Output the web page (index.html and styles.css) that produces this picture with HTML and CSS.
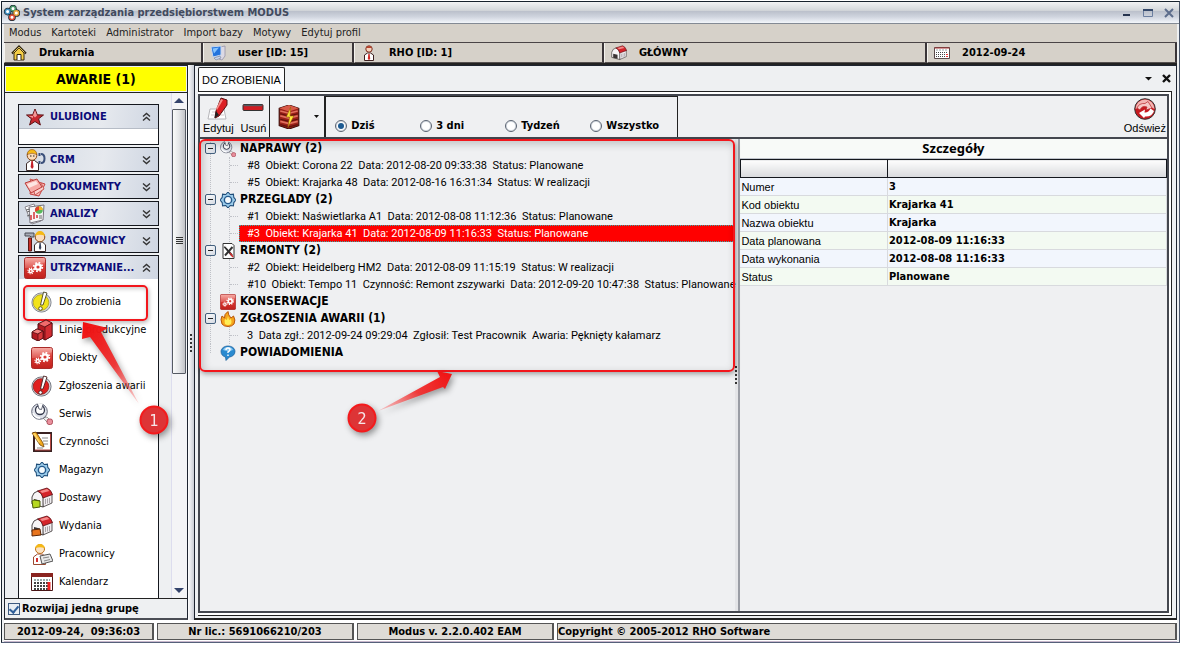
FILE: index.html
```
<!DOCTYPE html>
<html lang="pl">
<head>
<meta charset="utf-8">
<title>System zarządzania przedsiębiorstwem MODUS</title>
<link rel="stylesheet" href="styles.css">
</head>
<body>
<svg class="defs" aria-hidden="true">
  <defs>
    <linearGradient id="red" x1="0" y1="0" x2="0" y2="1"><stop offset="0" stop-color="#f79a92"/><stop offset=".45" stop-color="#d93a34"/><stop offset="1" stop-color="#c0201c"/></linearGradient>
    <linearGradient id="fade1" x1="0" y1="0" x2="1" y2="1"><stop offset="0" stop-color="#f00e0e"/><stop offset=".55" stop-color="#f22828" stop-opacity=".9"/><stop offset="1" stop-color="#f66" stop-opacity=".25"/></linearGradient>
    <linearGradient id="fade2" x1="1" y1="0" x2="0" y2="1"><stop offset="0" stop-color="#f00e0e"/><stop offset=".5" stop-color="#f22828" stop-opacity=".9"/><stop offset="1" stop-color="#f66" stop-opacity=".3"/></linearGradient>
    <symbol id="i-logo" viewBox="0 0 16 16"><g fill="none" stroke-width="3" stroke="#1c2b33"><circle cx="9" cy="3.600" r="2.300"/><circle cx="3.600" cy="6.600" r="2.300"/><circle cx="12.300" cy="8" r="2.300"/><circle cx="8" cy="12.300" r="2.300"/></g><g fill="#fff" stroke-width="1.500"><circle cx="9" cy="3.600" r="2.300" stroke="#4c9a6a"/><circle cx="3.600" cy="6.600" r="2.300" stroke="#3f8dc0"/><circle cx="12.300" cy="8" r="2.300" stroke="#e9a43c"/><circle cx="8" cy="12.300" r="2.300" stroke="#e04a35"/></g></symbol>
    <symbol id="i-home" viewBox="0 0 16 16"><path d="M3 8v7h10V8L8 3z" fill="#f6cf45" stroke="#3b2a10"/><path d="M1 8.500L8 1.500l7 7" fill="none" stroke="#2c2210" stroke-width="2"/><path d="M2.500 7.500L8 2.200l5.500 5.300" fill="none" stroke="#f4d668"/><path d="M6 15V9.500h4V15" fill="#fff" stroke="#2c2210"/></symbol>
    <symbol id="i-pc" viewBox="0 0 16 16"><path d="M10 2l5-1v10l-3 4-3-1z" fill="#dcd9e4" stroke="#8d8aa0" stroke-width=".7"/><path d="M1 2l10-1v9l-8 2z" fill="#2273dc" stroke="#c6d6ee"/><path d="M2.500 3.500l6.500-1-5 6z" fill="#86c4ff"/><path d="M4 13l6-2 1 2-5 2z" fill="#c9d5ea" stroke="#6f7d9c" stroke-width=".6"/></symbol>
    <symbol id="i-person" viewBox="0 0 16 16"><path d="M3.500 15.500V10l3-2h3l3 2v5.500z" fill="#fff" stroke="#3c2020"/><circle cx="8" cy="4" r="3.200" fill="#f8d3bd" stroke="#7a2a1c"/><path d="M5 3q3-4 6 0z" fill="#b8432c"/><path d="M7.300 9h1.400l.5 5-1.200 1-1.200-1z" fill="#d12b28"/></symbol>
    <symbol id="i-house" viewBox="0 0 22 22"><path d="M11 10l10-3v9l-9 4z" fill="#efecee" stroke="#3a3434" stroke-width=".8"/><path d="M1 10q1-5 6-6 4 1 5 6v10L1 17z" fill="#f7f5f6" stroke="#3a3434" stroke-width=".9"/><path d="M6.500 4L16 1q4 1.500 5.500 6.500L12 11Q11 6 6.500 4z" fill="#d4242a" stroke="#5c1015" stroke-width=".8"/><path d="M9 4l7-2 2.500 2L11 6z" fill="#f58a8a"/><path d="M3 12l6 1.500V19l-6-1.500z" fill="#3a3434"/><path d="M14.500 12v5M16.500 11.500v5M18.500 11v5" stroke="#aaa4a8"/></symbol>
    <symbol id="i-calsm" viewBox="0 0 16 12"><path d="M.5.5h15v11H.5z" fill="#fff" stroke="#5a4a4a"/><path d="M.5 1h15" stroke="#a33" stroke-width="1"/><path d="M2 3h12" stroke="#9aa" stroke-dasharray="2 1"/><path d="M2 5.500h12M2 7.500h12M2 9.500h12" stroke="#444" stroke-dasharray="1 1"/><path d="M12 7.500h2M12 9.500h2" stroke="#e33"/></symbol>
    <symbol id="i-star" viewBox="0 0 22 22"><path d="M11 3l2.300 5.800 6.200.2-4.900 3.800 1.800 6.200-5.400-3.500L5.600 19l1.800-6.200L2.500 9l6.200-.2z" fill="#c72a30" stroke="#5d1418"/><path d="M11 4l2 5.500-2 2-2-2zM4 9.700l5 .3v2z" fill="#f19a98"/></symbol>
    <symbol id="i-crm" viewBox="0 0 22 22"><path d="M2.500 21.500v-7l4-3h4l4 3v7z" fill="#fff" stroke="#3a2a2a"/><circle cx="8" cy="6.500" r="4.800" fill="#fbdcbb" stroke="#8a4a18"/><path d="M3 5.500Q4 .5 8 .5t5 5Q8 3 3 5.500z" fill="#f5b916" stroke="#8a4a18" stroke-width=".6"/><path d="M6 7h1.500M9 7h1.500" stroke="#222"/><path d="M7.400 12h1.400l.8 6-1.500 2-1.500-2z" fill="#c42028"/><path d="M17 5q3.500 0 3.500 4.500T17 14" fill="none" stroke="#3a4f7a" stroke-width="2"/><path d="M15.500 4v3M15.500 12v3" stroke="#3a4f7a" stroke-width="2"/></symbol>
    <symbol id="i-docs" viewBox="0 0 22 22"><path d="M8 4l13 4-6 12-9-2z" fill="#f8b9b5" stroke="#c5413f"/><path d="M6 3l11 4 3 6-9 6z" fill="#fad1cd" stroke="#cc5652"/><path d="M1 7l12-4 5 8-11 6z" fill="#f7aaa6" stroke="#b93d3b"/><path d="M3 8l9-3 2 3-9 4z" fill="#fde5e2"/></symbol>
    <symbol id="i-stats" viewBox="0 0 22 22"><path d="M1 4l9-3 7 17-9 3z" fill="#fff" stroke="#8b8990"/><path d="M5 4l15-2-1 15-13 3z" fill="#f7f6f8" stroke="#77747e"/><circle cx="15" cy="7" r="3.800" fill="#58b85a"/><path d="M15 7V3.200A3.800 3.800 0 0118.800 7z" fill="#f3b52b"/><path d="M15 7l-3.500 2A3.800 3.800 0 0115 3.200z" fill="#e0432c"/><path d="M7 17v-5M10 16v-7M13 15v-3" stroke="#d3343a" stroke-width="1.500"/><path d="M2 7l4-1M3 9l3-1M3 13l3-1M15 13h3M15 15h3" stroke="#666"/></symbol>
    <symbol id="i-work" viewBox="0 0 22 22"><path d="M1 3h9v4H7l-1-1H1z" fill="#a9adb8" stroke="#4a4d55"/><path d="M4.500 8h3v13h-3z" fill="#c83028" stroke="#5a1815"/><path d="M10.500 21.500V15l3-3h5l3 3v6.500z" fill="#fff" stroke="#3a2a2a"/><circle cx="16" cy="7" r="4.800" fill="#fbdcbb" stroke="#8a4a18"/><path d="M11 6Q12 1 16 1t5 5q-5-2.500-10 0z" fill="#f5b916"/><path d="M15.500 13h1.200l.6 5-1.200 2-1.200-2z" fill="#39435e"/></symbol>
    <symbol id="i-gear" viewBox="0 0 22 22"><rect x=".5" y=".5" width="21" height="21" rx="2" fill="url(#red)" stroke="#a82a28"/><path d="M1 11Q11 11 21 5v-4H1z" fill="#fff" opacity=".2"/><circle cx="14" cy="10" r="2.700" fill="none" stroke="#fff" stroke-width="2.200"/><circle cx="14" cy="10" r="4.300" fill="none" stroke="#fff" stroke-width="1.800" stroke-dasharray="1.700 1.677"/><circle cx="6.700" cy="14" r="1.600" fill="none" stroke="#fff" stroke-width="1.500"/><circle cx="6.700" cy="14" r="2.800" fill="none" stroke="#fff" stroke-width="1.200" stroke-dasharray="1.100 1.099"/></symbol>
    <symbol id="i-todo" viewBox="0 0 22 22"><circle cx="10.500" cy="11.500" r="9.600" fill="#d2d4d8" stroke="#888c94"/><circle cx="10" cy="11.500" r="7.800" fill="#f2e31a" stroke="#a89a10" stroke-width=".7"/><path d="M12.500 1l3.500 1-4 12h-2.500z" fill="#fff" stroke="#4a4520" stroke-width=".9"/><circle cx="9.500" cy="17.500" r="1.800" fill="#fff" stroke="#4a4520" stroke-width=".9"/></symbol>
    <symbol id="i-alarm" viewBox="0 0 22 22"><circle cx="10.500" cy="11.500" r="9.600" fill="#d2d4d8" stroke="#777b84"/><circle cx="10" cy="11.500" r="7.800" fill="#e02020" stroke="#8a1010" stroke-width=".7"/><path d="M12.500 1l3.500 1-4 12h-2.500z" fill="#fff" stroke="#4a2020" stroke-width=".9"/><circle cx="9.500" cy="17.500" r="1.800" fill="#fff" stroke="#4a2020" stroke-width=".9"/></symbol>
    <symbol id="i-lines" viewBox="0 0 22 22"><path d="M7 5l8-4 6 3v13l-7 4-7-4z" fill="#b51a22" stroke="#4d0c10"/><path d="M7 5l8-4 6 3-7 4z" fill="#f06a6c" stroke="#4d0c10" stroke-width=".7"/><path d="M14 8l7-4v13l-7 4z" fill="#d22c32" stroke="#4d0c10" stroke-width=".7"/><path d="M1 13l5-3 6 2v7l-5 3-6-3z" fill="#b51a22" stroke="#4d0c10"/><path d="M1 13l5-3 6 2-5 3z" fill="#f4807f" stroke="#4d0c10" stroke-width=".7"/><path d="M7 15l5-3v7l-5 3z" fill="#d8383b" stroke="#4d0c10" stroke-width=".7"/></symbol>
    <symbol id="i-wrench" viewBox="0 0 22 22"><path d="M12 15l4-1 2 2-2 3z" fill="#eee" stroke="#777" stroke-width=".7"/><rect x="16" y="16" width="5.500" height="5.500" rx="2" fill="#e88f9c" stroke="#a33b48" stroke-width=".8"/><circle cx="8.500" cy="8.500" r="7.800" fill="#dfe2ea" stroke="#55596a" stroke-width=".9"/><circle cx="9" cy="7" r="4.500" fill="#fff" stroke="#33374a" stroke-width="1.300"/><path d="M6.500 0l1.500 5.500 2.500.5 1.500-5.500z" fill="#fff"/><path d="M6.500 1L8 6l2.500.5L12 1.500" fill="none" stroke="#55596a" stroke-width=".9"/><path d="M2 10q2 5 7 5" fill="none" stroke="#fff" stroke-width="1.500"/></symbol>
    <symbol id="i-notes" viewBox="0 0 22 22"><path d="M3 2h17v18H3z" fill="#fff" stroke="#3a2222" stroke-width="2"/><path d="M19.500 3v16H4" fill="none" stroke="#b34540"/><path d="M11 7h6M12 10h5M13 13h4M6 17h6" stroke="#888"/><path d="M1 2l4-1 7 11 1 4-4-2z" fill="#f3a91d" stroke="#70420c" stroke-width=".8"/><path d="M2 3l2-1 5 9-1 1z" fill="#fbd568"/></symbol>
    <symbol id="i-cog" viewBox="0 0 22 22"><path d="M11 0l3 3.500 4.500-.5.500 4.500 3 3.500-3 3.500-.5 4.500-4.500-.5-3 3.500-3-3.500-4.500.5-.5-4.500L0 11l3-3.500L3.500 3l4.500.5z" fill="#9acbea" stroke="#1f4d79" stroke-width="1.400"/><circle cx="11" cy="11" r="5" fill="#f5fafd" stroke="#24598c" stroke-width="2"/></symbol>
    <symbol id="i-worker" viewBox="0 0 22 22"><path d="M2.500 21.500V14l4-3h5l3 3v7.500z" fill="#fff" stroke="#9a4a30"/><circle cx="9" cy="6" r="4.500" fill="#fbe3c4" stroke="#c0701c"/><path d="M4 5.500Q5 1 9 1t5 4.500Q9 3 4 5.500z" fill="#f5b916"/><path d="M6 15v4" stroke="#d33030" stroke-width="2"/><path d="M9 13l10-2 3 7-11 3z" fill="#e8e8e8" stroke="#555"/><path d="M12 15l6-1M13 18l6-1.500" stroke="#888"/></symbol>
    <symbol id="i-cal" viewBox="0 0 22 18"><path d="M.5.500h21v17H.5z" fill="#fff" stroke="#4a1616"/><path d="M0 2h22" stroke="#8a2420" stroke-width="4"/><path d="M3 7h16" stroke="#9aa" stroke-width="2" stroke-dasharray="2 1"/><path d="M3 10h16M3 13h16M3 16h14" stroke="#444" stroke-width="2" stroke-dasharray="2 1"/><path d="M18 9v8" stroke="#e22" stroke-width="3"/></symbol>
    <symbol id="i-edit" viewBox="0 0 22 24"><path d="M3 12h14l2 10H1z" fill="#fff" stroke="#b6b6ba"/><path d="M5 15h11M4 18h13" stroke="#d5c8cc"/><path d="M14 1l6 2v5l-8 11-4 2 1-7z" fill="#dc1f24" stroke="#5a1012"/><path d="M14 2l2 1-6 10-1-1z" fill="#f68c88"/><path d="M9 14l3 4-4.500 3z" fill="#222"/></symbol>
    <symbol id="i-crate" viewBox="0 0 20 22"><path d="M1 3l9-3 9 3v16l-9 3-9-3z" fill="#9c2018" stroke="#3d0c08"/><path d="M1 3l9-3 9 3-9 3z" fill="#d85a48"/><path d="M2 5.500l8 2 8-2M2 10l8 2 8-2M2 15l8 2 8-2" fill="none" stroke="#e0705e" stroke-width="1.500"/><path d="M2 8l8 2 8-2M2 13l8 2 8-2M2 18l8 2 8-2" fill="none" stroke="#5f100c" stroke-width="1"/><path d="M11.500 2L7.500 11h3l-1.500 9.500L14.500 10h-3.500z" fill="#ffe63c" stroke="#9a5a08" stroke-width=".6"/></symbol>
    <symbol id="i-refresh" viewBox="0 0 22 22"><circle cx="11" cy="11" r="10.300" fill="#c61a20" stroke="#333"/><path d="M1.500 11a9.500 9.500 0 0119 0Q11 4 1.500 11z" fill="#f3b4b2"/><path d="M3 10q2-5 8-4.500l3-2 4 6.500-6 2 1-3Q8 7 6 12z" fill="#f6c8c6" stroke="#b8252a" stroke-width=".7"/><path d="M20 13q-2 6-9 5.500l-1 1.500-5-5 6-3.500-.5 3q4 .5 6-4z" fill="#fff"/></symbol>
    <symbol id="i-tools" viewBox="0 0 16 16"><path d="M3 .5h9l2 2v13H3z" fill="#fff" stroke="#333"/><path d="M4.500 3.500l7.500 9M12.500 4L5 12.500" stroke="#333" stroke-width="2"/><path d="M10 10l3 4" stroke="#d02c2c" stroke-width="1.500"/><path d="M5 3l4 4" stroke="#ccc"/></symbol>
    <symbol id="i-fire" viewBox="0 0 16 16"><path d="M2 13Q0 8 2 5l2.500 2Q4 3 8 .5 8 4 11 7l2.500-2Q16 9 14 13q-2 2.500-6 2.500T2 13z" fill="#f6a51c" stroke="#b8560c"/><path d="M5 13q-1-3 0-5l2 1 1-4 1 4 2-1Q12 11 11 13q-3 2-6 0z" fill="#ffee55"/></symbol>
    <symbol id="i-help" viewBox="0 0 16 16"><path d="M8 1c4 0 7 2.300 7 5.500S12 12 9.500 12L6 15.500 5.500 12C3 11.500 1 9.500 1 6.500S4 1 8 1z" fill="#2a8ad0" stroke="#1c5f98" stroke-width=".7"/><path d="M3 5q1-3 5-3t5 3q-5 2-10 0z" fill="#8fcaf2"/><path d="M6 5q0-2 2-2t2 1.700Q10 6 8 7v1M8 9.500v1.500" fill="none" stroke="#fff" stroke-width="1.400"/></symbol>
    <symbol id="i-up" viewBox="0 0 9 10"><path d="M1 4.500l3.500-3 3.500 3M1 8.500l3.500-3 3.500 3" fill="none" stroke="#333" stroke-width="1.400"/></symbol>
    <symbol id="i-down" viewBox="0 0 9 10"><path d="M1 1.500l3.500 3 3.500-3M1 5.500l3.500 3 3.500-3" fill="none" stroke="#333" stroke-width="1.400"/></symbol>
  </defs>
</svg>
<div class="window">
  <header class="titlebar">
    <svg class="ic16"><use href="#i-logo"/></svg>
    <h1>System zarządzania przedsiębiorstwem MODUS</h1>
    <button class="winbtn" aria-label="Minimalizuj"><svg viewBox="0 0 10 10"><path d="M1 7h7" stroke="#26344f" stroke-width="2"/></svg></button>
    <button class="winbtn" aria-label="Maksymalizuj"><svg viewBox="0 0 10 10"><path d="M.5 2.500h9v6h-9z" fill="none" stroke="#6c7fa0"/><path d="M0 2h10" stroke="#35496b" stroke-width="2"/></svg></button>
    <button class="winbtn" aria-label="Zamknij okno"><svg viewBox="0 0 10 10"><path d="M1 1l8 8M9 1L1 9" stroke="#5d6d8c" stroke-width="2"/></svg></button>
  </header>
  <nav class="menu" aria-label="Menu">
    <button>Modus</button><button>Kartoteki</button><button>Administrator</button><button>Import bazy</button><button>Motywy</button><button>Edytuj profil</button>
  </nav>
  <div class="infobar">
    <div class="info i1"><svg class="ic16"><use href="#i-home"/></svg>Drukarnia</div>
    <div class="info i2"><svg class="ic16"><use href="#i-pc"/></svg>user [ID: 15]</div>
    <div class="info i3"><svg class="ic16"><use href="#i-person"/></svg>RHO [ID: 1]</div>
    <div class="info i4"><svg class="ic16"><use href="#i-house"/></svg>GŁÓWNY</div>
    <div class="info i5"><svg class="ic16"><use href="#i-calsm"/></svg>2012-09-24</div>
  </div>
  <div class="main">
    <aside class="side">
      <button class="alert">AWARIE (1)</button>
      <div class="sidebody">
        <div class="groups">
          <section class="group"><button class="ghead"><svg class="ic22"><use href="#i-star"/></svg><span>ULUBIONE</span><svg class="chev"><use href="#i-up"/></svg></button><div class="empty"></div></section>
          <section class="group"><button class="ghead"><svg class="ic22"><use href="#i-crm"/></svg><span>CRM</span><svg class="chev"><use href="#i-down"/></svg></button></section>
          <section class="group"><button class="ghead"><svg class="ic22"><use href="#i-docs"/></svg><span>DOKUMENTY</span><svg class="chev"><use href="#i-down"/></svg></button></section>
          <section class="group"><button class="ghead"><svg class="ic22"><use href="#i-stats"/></svg><span>ANALIZY</span><svg class="chev"><use href="#i-down"/></svg></button></section>
          <section class="group"><button class="ghead"><svg class="ic22"><use href="#i-work"/></svg><span>PRACOWNICY</span><svg class="chev"><use href="#i-down"/></svg></button></section>
          <section class="group open"><button class="ghead"><svg class="ic22"><use href="#i-gear"/></svg><span>UTRZYMANIE...</span><svg class="chev"><use href="#i-up"/></svg></button>
            <div class="items">
              <a href="#" class="marked"><svg class="ic22"><use href="#i-todo"/></svg>Do zrobienia</a>
              <a href="#"><svg class="ic22"><use href="#i-lines"/></svg>Linie produkcyjne</a>
              <a href="#"><svg class="ic22"><use href="#i-gear"/></svg>Obiekty</a>
              <a href="#"><svg class="ic22"><use href="#i-alarm"/></svg>Zgłoszenia awarii</a>
              <a href="#"><svg class="ic22"><use href="#i-wrench"/></svg>Serwis</a>
              <a href="#"><svg class="ic22"><use href="#i-notes"/></svg>Czynności</a>
              <a href="#"><svg class="ic22 small"><use href="#i-cog"/></svg>Magazyn</a>
              <a href="#"><svg class="ic22" viewBox="0 0 22 22"><use href="#i-house" width="22" height="22"/><path d="M1 14l2-1 6 1v6l-7 1z" fill="#b6d820" stroke="#4c5c08"/></svg>Dostawy</a>
              <a href="#"><svg class="ic22" viewBox="0 0 22 22"><use href="#i-house" width="22" height="22"/><path d="M1 15l8-1 1 6-9 1z" fill="#e8741c" stroke="#5a2608"/></svg>Wydania</a>
              <a href="#"><svg class="ic22"><use href="#i-worker"/></svg>Pracownicy</a>
              <a href="#"><svg class="ic22"><use href="#i-cal"/></svg>Kalendarz</a>
            </div>
          </section>
        </div>
        <div class="scroll" aria-hidden="true">
          <svg class="arr" viewBox="0 0 10 6"><path d="M0 6l5-5 5 5z" fill="#34436b"/></svg>
          <div class="track"><div class="thumb"><i></i></div></div>
          <svg class="arr" viewBox="0 0 10 6"><path d="M0 0l5 5 5-5z" fill="#34436b"/></svg>
        </div>
      </div>
      <label class="expand"><input type="checkbox" checked>Rozwijaj jedną grupę</label>
    </aside>
    <div class="gutter"><i class="dots"></i></div>
    <main class="work">
      <div class="tabs">
        <button class="tab">DO ZROBIENIA</button>
        <button class="tabbtn" aria-label="Lista kart"><svg viewBox="0 0 9 9"><path d="M1 3h7L4.500 6.500z" fill="#111"/></svg></button>
        <button class="tabbtn" aria-label="Zamknij kartę"><svg viewBox="0 0 9 9"><path d="M1 1l7 7M8 1L1 8" stroke="#111" stroke-width="2.400"/></svg></button>
      </div>
      <div class="frame"><div class="pane">
        <div class="toolbar">
          <div class="tgroup"><button class="tool"><svg class="edit"><use href="#i-edit"/></svg>Edytuj</button><button class="tool"><svg class="edit" viewBox="0 0 22 24"><rect x="1" y="7.500" width="20" height="6" rx="1" fill="#d01c22" stroke="#333"/><path d="M2 8.500h18" stroke="#555b60" stroke-width="1.500"/></svg>Usuń</button></div>
          <button class="crate" aria-label="Akcje"><svg class="box"><use href="#i-crate"/></svg><svg class="caret" viewBox="0 0 5 3"><path d="M0 0h5L2.500 3z" fill="#111"/></svg></button>
          <div class="range" role="radiogroup" aria-label="Zakres">
            <label><input type="radio" name="r" checked>Dziś</label>
            <label><input type="radio" name="r">3 dni</label>
            <label><input type="radio" name="r">Tydzeń</label>
            <label><input type="radio" name="r">Wszystko</label>
          </div>
          <button class="tool refresh"><svg class="edit"><use href="#i-refresh"/></svg>Odśwież</button>
        </div>
        <div class="split">
          <div class="treepane">
            <ul class="tree">
              <li><h2><button class="pm" aria-label="Zwiń Naprawy"></button><svg class="ic16"><use href="#i-wrench"/></svg>NAPRAWY (2)</h2>
                <ul><li>#8  Obiekt: Corona 22  Data: 2012-08-20 09:33:38  Status: Planowane</li><li>#5  Obiekt: Krajarka 48  Data: 2012-08-16 16:31:34  Status: W realizacji</li></ul></li>
              <li><h2><button class="pm" aria-label="Zwiń Przeglądy"></button><svg class="ic16"><use href="#i-cog"/></svg>PRZEGLADY (2)</h2>
                <ul><li>#1  Obiekt: Naświetlarka A1  Data: 2012-08-08 11:12:36  Status: Planowane</li><li class="sel">#3  Obiekt: Krajarka 41  Data: 2012-08-09 11:16:33  Status: Planowane</li></ul></li>
              <li><h2><button class="pm" aria-label="Zwiń Remonty"></button><svg class="ic16"><use href="#i-tools"/></svg>REMONTY (2)</h2>
                <ul><li>#2  Obiekt: Heidelberg HM2  Data: 2012-08-09 11:15:19  Status: W realizacji</li><li>#10  Obiekt: Tempo 11  Czynność: Remont zszywarki  Data: 2012-09-20 10:47:38  Status: Planowane</li></ul></li>
              <li><h2><i class="nopm"></i><svg class="ic16"><use href="#i-gear"/></svg>KONSERWACJE</h2></li>
              <li><h2><button class="pm" aria-label="Zwiń Zgłoszenia"></button><svg class="ic16"><use href="#i-fire"/></svg>ZGŁOSZENIA AWARII (1)</h2>
                <ul><li>3  Data zgł.: 2012-09-24 09:29:04  Zgłosił: Test Pracownik  Awaria: Pęknięty kałamarz</li></ul></li>
              <li><h2><i class="nopm"></i><svg class="ic16"><use href="#i-help"/></svg>POWIADOMIENIA</h2></li>
            </ul>
          </div>
          <div class="divider"><i class="dots"></i></div>
          <section class="details">
            <h2>Szczegóły</h2>
            <table>
              <thead><tr><th aria-label="Pole"></th><th aria-label="Wartość"></th></tr></thead>
              <tbody>
                <tr><td>Numer</td><td>3</td></tr>
                <tr><td>Kod obiektu</td><td>Krajarka 41</td></tr>
                <tr><td>Nazwa obiektu</td><td>Krajarka</td></tr>
                <tr><td>Data planowana</td><td>2012-08-09 11:16:33</td></tr>
                <tr><td>Data wykonania</td><td>2012-08-08 11:16:33</td></tr>
                <tr><td>Status</td><td>Planowane</td></tr>
              </tbody>
            </table>
          </section>
        </div>
      </div></div>
    </main>
  </div>
  <footer class="status">
    <div class="s1">2012-09-24,  09:36:03</div><div class="s2">Nr lic.: 5691066210/203</div><div class="s2">Modus v. 2.2.0.402 EAM</div><div class="s3">Copyright © 2005-2012 RHO Software</div>
  </footer>
</div>
<svg class="callout c1" viewBox="0 0 110 130"><path d="M13 7L38 13 31 17 69 89 20 22 12 24z" fill="url(#fade1)"/><circle cx="84" cy="105" r="13.500" fill="#dd3436" stroke="#f41a1c" stroke-width="2"/><text x="84" y="111" text-anchor="middle">1</text></svg>
<svg class="callout c2" viewBox="0 0 120 80"><path d="M112 9L97 6 100 12 38 46 103 22 105 24z" fill="url(#fade2)"/><circle cx="22" cy="53" r="13.500" fill="#dd3436" stroke="#f41a1c" stroke-width="2"/><text x="22" y="59" text-anchor="middle">2</text></svg>
</body>
</html>
```
FILE: styles.css
```
* { box-sizing: border-box; }
html, body { height: 100%; }
body { margin: 0; position: relative; background: #fff; padding: 1px 1px 2px; font: 11px/14px "DejaVu Sans Condensed", "DejaVu Sans", sans-serif; color: #000; overflow: hidden; }
button { font: inherit; color: inherit; background: none; border: 0; padding: 0; margin: 0; white-space: nowrap; }
a { color: inherit; text-decoration: none; }
h1, h2, ul { margin: 0; padding: 0; font: inherit; list-style: none; }
svg { display: block; flex: none; }
.defs { position: absolute; width: 0; height: 0; }
.ic16 { width: 16px; height: 16px; }
.ic22 { width: 22px; height: 22px; }

.window { height: 100%; display: flex; flex-direction: column; border: 1px solid #17212c; border-right-color: #4a5568; border-bottom-color: #55607a; background: #eef0f2; padding: 0 2px; }
.titlebar { height: 22px; flex: none; display: flex; align-items: center; padding: 0 0 0 2px; background: linear-gradient(#f1f2f3, #d3d6da 40%, #bcc1cc 45%, #cfd4de 70%, #f3f6fb); border-bottom: 1px solid #838a94; margin: 0 -2px; }
.titlebar h1 { font-weight: bold; color: #414a5e; margin: 0 auto 0 3px; }
.winbtn { width: 21px; height: 16px; display: grid; place-items: center; }
.winbtn svg { width: 10px; height: 10px; }
.menu { height: 18px; flex: none; display: flex; gap: 10px; align-items: center; padding-left: 5px; background: #d6d1c9; color: #222; }
.infobar { height: 23px; flex: none; display: flex; background: #d6d1c9; border-top: 1px solid #4a4446; border-bottom: 2px solid #222; }
.info { display: flex; align-items: center; font-weight: bold; border-right: 2px solid #3a3538; border-left: 1px solid #f4f2ee; border-bottom: 1px solid #55504f; padding-left: 6px; gap: 12px; white-space: nowrap; }
.i1 { width: 199px; }
.i2 { width: 151px; }
.i3 { width: 250px; }
.i4 { width: 323px; }
.i5 { flex: 1; }

.main { flex: 1; min-height: 0; display: flex; }
.side { width: 184px; flex: none; display: flex; flex-direction: column; border: 1px solid #1e2430; border-bottom: 2px solid #4a4d55; }
.alert { height: 24px; flex: none; background: #ff0; margin: 1px; font-weight: bold; font-size: 14px; }
.sidebody { flex: 1; min-height: 0; display: flex; border-top: 1px solid #222; border-bottom: 1px solid #222; }
.groups { flex: 1; min-width: 0; padding: 11px 12px 0 13px; display: flex; flex-direction: column; gap: 1px; overflow: hidden; }
.group { flex: none; border: 1px solid #14171d; background: #fff; margin-bottom: 1px; }
.open { flex: 1; min-height: 0; margin: 0; border-bottom: 0; overflow: hidden; }
.ghead { width: 100%; height: 23px; display: flex; align-items: center; gap: 4px; padding: 0 7px 0 5px; background: linear-gradient(100deg, #d3dae4, #e6e9ee 60%, #cfd6e2); font-weight: bold; color: #0b0b78; }
.ghead span { flex: 1; text-align: left; overflow: hidden; }
.chev { width: 9px; height: 10px; }
.empty { height: 16px; border-top: 1px solid #b6bcc6; }
.items { padding-top: 9px; }
.items a { position: relative; height: 28px; display: flex; align-items: center; gap: 6px; padding-left: 12px; white-space: nowrap; }
.items svg.small { padding: 3px; }
.marked::after { content: ""; position: absolute; left: 4px; right: 10px; top: -3px; height: 32px; border: 2px solid #f2161c; border-radius: 5px; box-shadow: 1px 2px 4px #0004, inset 1px 2px 4px #0003; }
.scroll { width: 16px; display: flex; flex-direction: column; align-items: center; border-left: 1px solid #dde; padding: 4px 1px 4px 0; gap: 6px; background: #f4f4f6; }
.arr { width: 10px; height: 6px; }
.track { flex: 1; width: 14px; }
.thumb { height: 56%; border: 1px solid #555a63; border-radius: 1px; background: linear-gradient(90deg, #fafafa, #e4e5e8 50%, #c3c4c8); display: grid; place-items: center; }
.thumb i { width: 7px; height: 8px; background: repeating-linear-gradient(#333 0 1px, transparent 1px 2px); }
.expand { height: 19px; flex: none; display: flex; align-items: center; gap: 2px; padding-left: 3px; font-weight: bold; }
input { appearance: none; margin: 0; flex: none; background: #fff; }
input[type=checkbox] { width: 12px; height: 12px; border: 1px solid #3d5a80; background: #e8eef4; display: grid; place-items: center; }
input[type=checkbox]:checked::after { content: ""; width: 4px; height: 7px; border: solid #2f5f9a; border-width: 0 2px 2px 0; transform: rotate(40deg); margin-bottom: 2px; }
input[type=radio] { width: 12px; height: 12px; border: 1px solid #596270; border-radius: 50%; box-shadow: inset 0 0 0 1px #d4dae2; display: grid; place-items: center; }
input[type=radio]:checked::after { content: ""; width: 6px; height: 6px; border-radius: 50%; background: #1c5a92; }
.gutter { width: 6px; flex: none; display: grid; place-items: center; background: linear-gradient(90deg, #fff, #c9ccd4); }
.dots { width: 2px; height: 18px; background: repeating-linear-gradient(#333 0 2px, transparent 2px 4px); }

.work { flex: 1; min-width: 0; display: flex; flex-direction: column; border: 1px solid #1e2430; padding: 0 4px 2px 3px; border-bottom: 2px solid #222; }
.tabs { height: 25px; flex: none; display: flex; align-items: center; gap: 9px; padding-right: 1px; }
.tab { align-self: flex-end; height: 24px; border: 1px solid #222; border-bottom: 0; background: #fcfcfd; padding: 0 3px; margin-right: auto; font-family: "Liberation Sans", Arial, sans-serif; border-radius: 2px 2px 0 0; }
.tabbtn svg { width: 9px; height: 9px; }
.frame { flex: 1; min-height: 0; display: flex; border: 1px solid #222; border-left: 0; padding: 2px; background: #fff; }
.pane { flex: 1; min-width: 0; display: flex; flex-direction: column; border: 2px solid #44474f; background: #eff0f2; margin-left: -2px; }
.toolbar { height: 43px; flex: none; display: flex; border-bottom: 2px solid #44474f; }
.tgroup { display: flex; gap: 7px; padding: 0 3px 0 3px; border-right: 1px solid #222; }
.tool { display: flex; flex-direction: column; align-items: center; justify-content: flex-end; font-family: "Liberation Sans", Arial, sans-serif; line-height: 13px; padding-bottom: 2px; gap: 1px; }
.edit { width: 22px; height: 24px; }
.crate { width: 54px; display: flex; align-items: center; gap: 14px; padding-left: 8px; }
.box { width: 22px; height: 24px; }
.caret { width: 5px; height: 3px; }
.range { width: 354px; display: grid; grid-template-columns: repeat(4, 85px); padding: 23px 0 0 9px; border: 1px solid #222; border-left-width: 2px; border-bottom: 0; }
.range label { display: flex; align-items: center; gap: 4px; font-weight: bold; height: 12px; }
.refresh { margin-left: auto; padding-right: 1px; }
.split { flex: 1; min-height: 0; display: flex; }
.treepane { flex: 536; min-width: 0; }
.tree { position: relative; height: 233px; padding: 1px 0 0 5px; font-family: Roboto, "Liberation Sans", sans-serif; }
.tree::after { content: ""; position: absolute; inset: 0 0 0 -1px; border: 2px solid #f2161c; border-radius: 6px; box-shadow: 1px 2px 5px #0005, inset 2px 3px 8px #0003; pointer-events: none; }
.tree h2 { position: relative; display: flex; align-items: center; gap: 4px; height: 17px; font: bold 12px/17px "DejaVu Sans Condensed", "DejaVu Sans", sans-serif; }
.tree > li { position: relative; }
.tree > li::before { content: ""; position: absolute; left: 5px; top: 0; bottom: 0; border-left: 1px dotted #c0c2c8; }
.tree > li:last-child::before { bottom: 8px; }
.pm, .nopm { position: relative; width: 11px; height: 11px; }
.pm { border: 1px solid #44617f; background: linear-gradient(135deg, #fff, #d4d9e2); border-radius: 2px; }
.pm::after { content: ""; position: absolute; left: 2px; right: 2px; top: 4px; height: 1px; background: #222; }
.tree ul { margin-left: 24px; border-left: 1px dotted #c0c2c8; padding-left: 9px; }
.tree ul li { height: 17px; line-height: 17px; padding-left: 8px; white-space: pre; position: relative; }
.tree ul li::before { content: ""; position: absolute; left: -9px; width: 8px; top: 8px; border-top: 1px dotted #c0c2c8; }
.tree .sel { background: #f00; color: #fff; outline: 1px dotted #3aa; outline-offset: -1px; }
.divider { width: 5px; display: grid; place-items: center; border-right: 2px solid #9a9da5; background: #e4e5e8; }
.details { flex: 428; min-width: 0; }
.details h2 { height: 20px; font: bold 13px/19px "Noto Sans", "DejaVu Sans Condensed", sans-serif; text-align: center; background: #f8faf8; border-bottom: 1px solid #c0c4cc; }
table { width: 100%; border-collapse: collapse; table-layout: fixed; font: 11px/14px "Liberation Sans", Arial, sans-serif; }
th { height: 18px; padding: 0; border: 1px solid #14171d; background: linear-gradient(#fdfdfd, #d9dadd); }
th:first-child { width: 147px; }
td { height: 18px; padding: 2px 1px 1px; border-bottom: 1px solid #d8dade; border-right: 1px solid #d8dade; background: #f2f6fd; white-space: nowrap; }
tr:nth-child(even) td { background: #f3faf2; }
td + td { font: bold 11px/14px "DejaVu Sans Condensed", "DejaVu Sans", sans-serif; }

.status { height: 22px; flex: none; display: flex; gap: 3px; padding: 3px 0 1px; border-bottom: 1px solid #c9b8cc; background: #fff; font-weight: bold; white-space: pre; }
.status div { display: flex; align-items: center; justify-content: center; background: #dedbd6; border: 1px solid #555; border-right-width: 2px; }
.s1 { width: 150px; }
.s2 { width: 197px; }
.status .s3 { flex: 1; justify-content: flex-start; }

.callout { position: absolute; pointer-events: none; filter: drop-shadow(2px 3px 3px #0006); font: bold 16px "DejaVu Sans Condensed", sans-serif; }
.callout text { fill: #f6e6e8; font-weight: normal; }
.c1 { left: 70px; top: 315px; width: 110px; height: 130px; }
.c2 { left: 340px; top: 365px; width: 120px; height: 80px; }
```
